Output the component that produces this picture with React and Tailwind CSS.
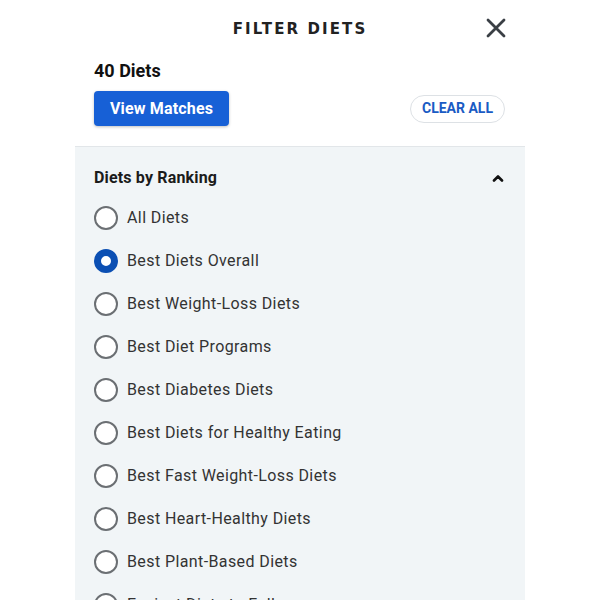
import React from 'react';

const OPTIONS = [
  'All Diets',
  'Best Diets Overall',
  'Best Weight-Loss Diets',
  'Best Diet Programs',
  'Best Diabetes Diets',
  'Best Diets for Healthy Eating',
  'Best Fast Weight-Loss Diets',
  'Best Heart-Healthy Diets',
  'Best Plant-Based Diets',
  'Easiest Diets to Follow',
];

const Radio = ({ checked }) =>
  checked ? (
    <span className="w-6 h-6 rounded-full border-[7px] border-[#0b4fb3] bg-white flex-shrink-0" />
  ) : (
    <span className="w-6 h-6 rounded-full border-2 border-[#6b6f73] bg-white flex-shrink-0" />
  );

export default function App() {
  return (
    <div className="w-[600px] h-[600px] bg-white overflow-hidden font-['Roboto',sans-serif]">
      <div className="w-[450px] ml-[75px]">
        {/* header */}
        <div className="relative h-[58px] flex items-center justify-center">
          <h1 className="font-['DejaVu_Sans',sans-serif] font-bold text-[15px] tracking-[0.14em] text-[#222] mt-[1px]">
            FILTER DIETS
          </h1>
          <svg className="absolute right-[19px] top-[18px]" width="20" height="20" viewBox="0 0 20 20">
            <path d="M2 2 L18 18 M18 2 L2 18" stroke="#3a3f45" strokeWidth="2.8" strokeLinecap="round" />
          </svg>
        </div>

        <div className="px-[19px]">
          <p className="text-[18px] font-bold text-[#111] leading-none pt-[4px]">40 Diets</p>
          <div className="flex items-center justify-between mt-[11px]">
            <button className="h-[35px] px-[16px] rounded-[4px] bg-[#1760d6] text-white text-[16px] font-bold tracking-[0.01em] shadow-[0_1px_3px_rgba(0,0,0,0.25)]">
              View Matches
            </button>
            <button className="h-[28px] px-[11px] mr-[1px] rounded-full border border-[#dde1e5] bg-white text-[#1a5bc4] text-[14px] font-bold">
              CLEAR ALL
            </button>
          </div>
        </div>

        {/* panel */}
        <div className="mt-[20px] border-t border-[#e2e6e9] bg-[#f1f5f7] h-[460px]">
          <div className="flex items-center justify-between px-[19px] pt-[19px]">
            <h2 className="text-[16px] font-bold text-[#1b1b1b] tracking-[0.01em]">Diets by Ranking</h2>
            <svg className="mr-[2px]" width="12" height="8" viewBox="0 0 12 8">
              <path d="M2 6.5 L6 2.5 L10 6.5" fill="none" stroke="#111" strokeWidth="2.6" strokeLinecap="round" strokeLinejoin="round" />
            </svg>
          </div>
          <ul className="px-[19px] pt-[16px] flex flex-col gap-[19px]">
            {OPTIONS.map((label, i) => (
              <li key={label} className="flex items-center gap-[9px] h-[24px]">
                <Radio checked={i === 1} />
                <span className="text-[16px] text-[#333] tracking-[0.025em]">{label}</span>
              </li>
            ))}
          </ul>
        </div>
      </div>
    </div>
  );
}
